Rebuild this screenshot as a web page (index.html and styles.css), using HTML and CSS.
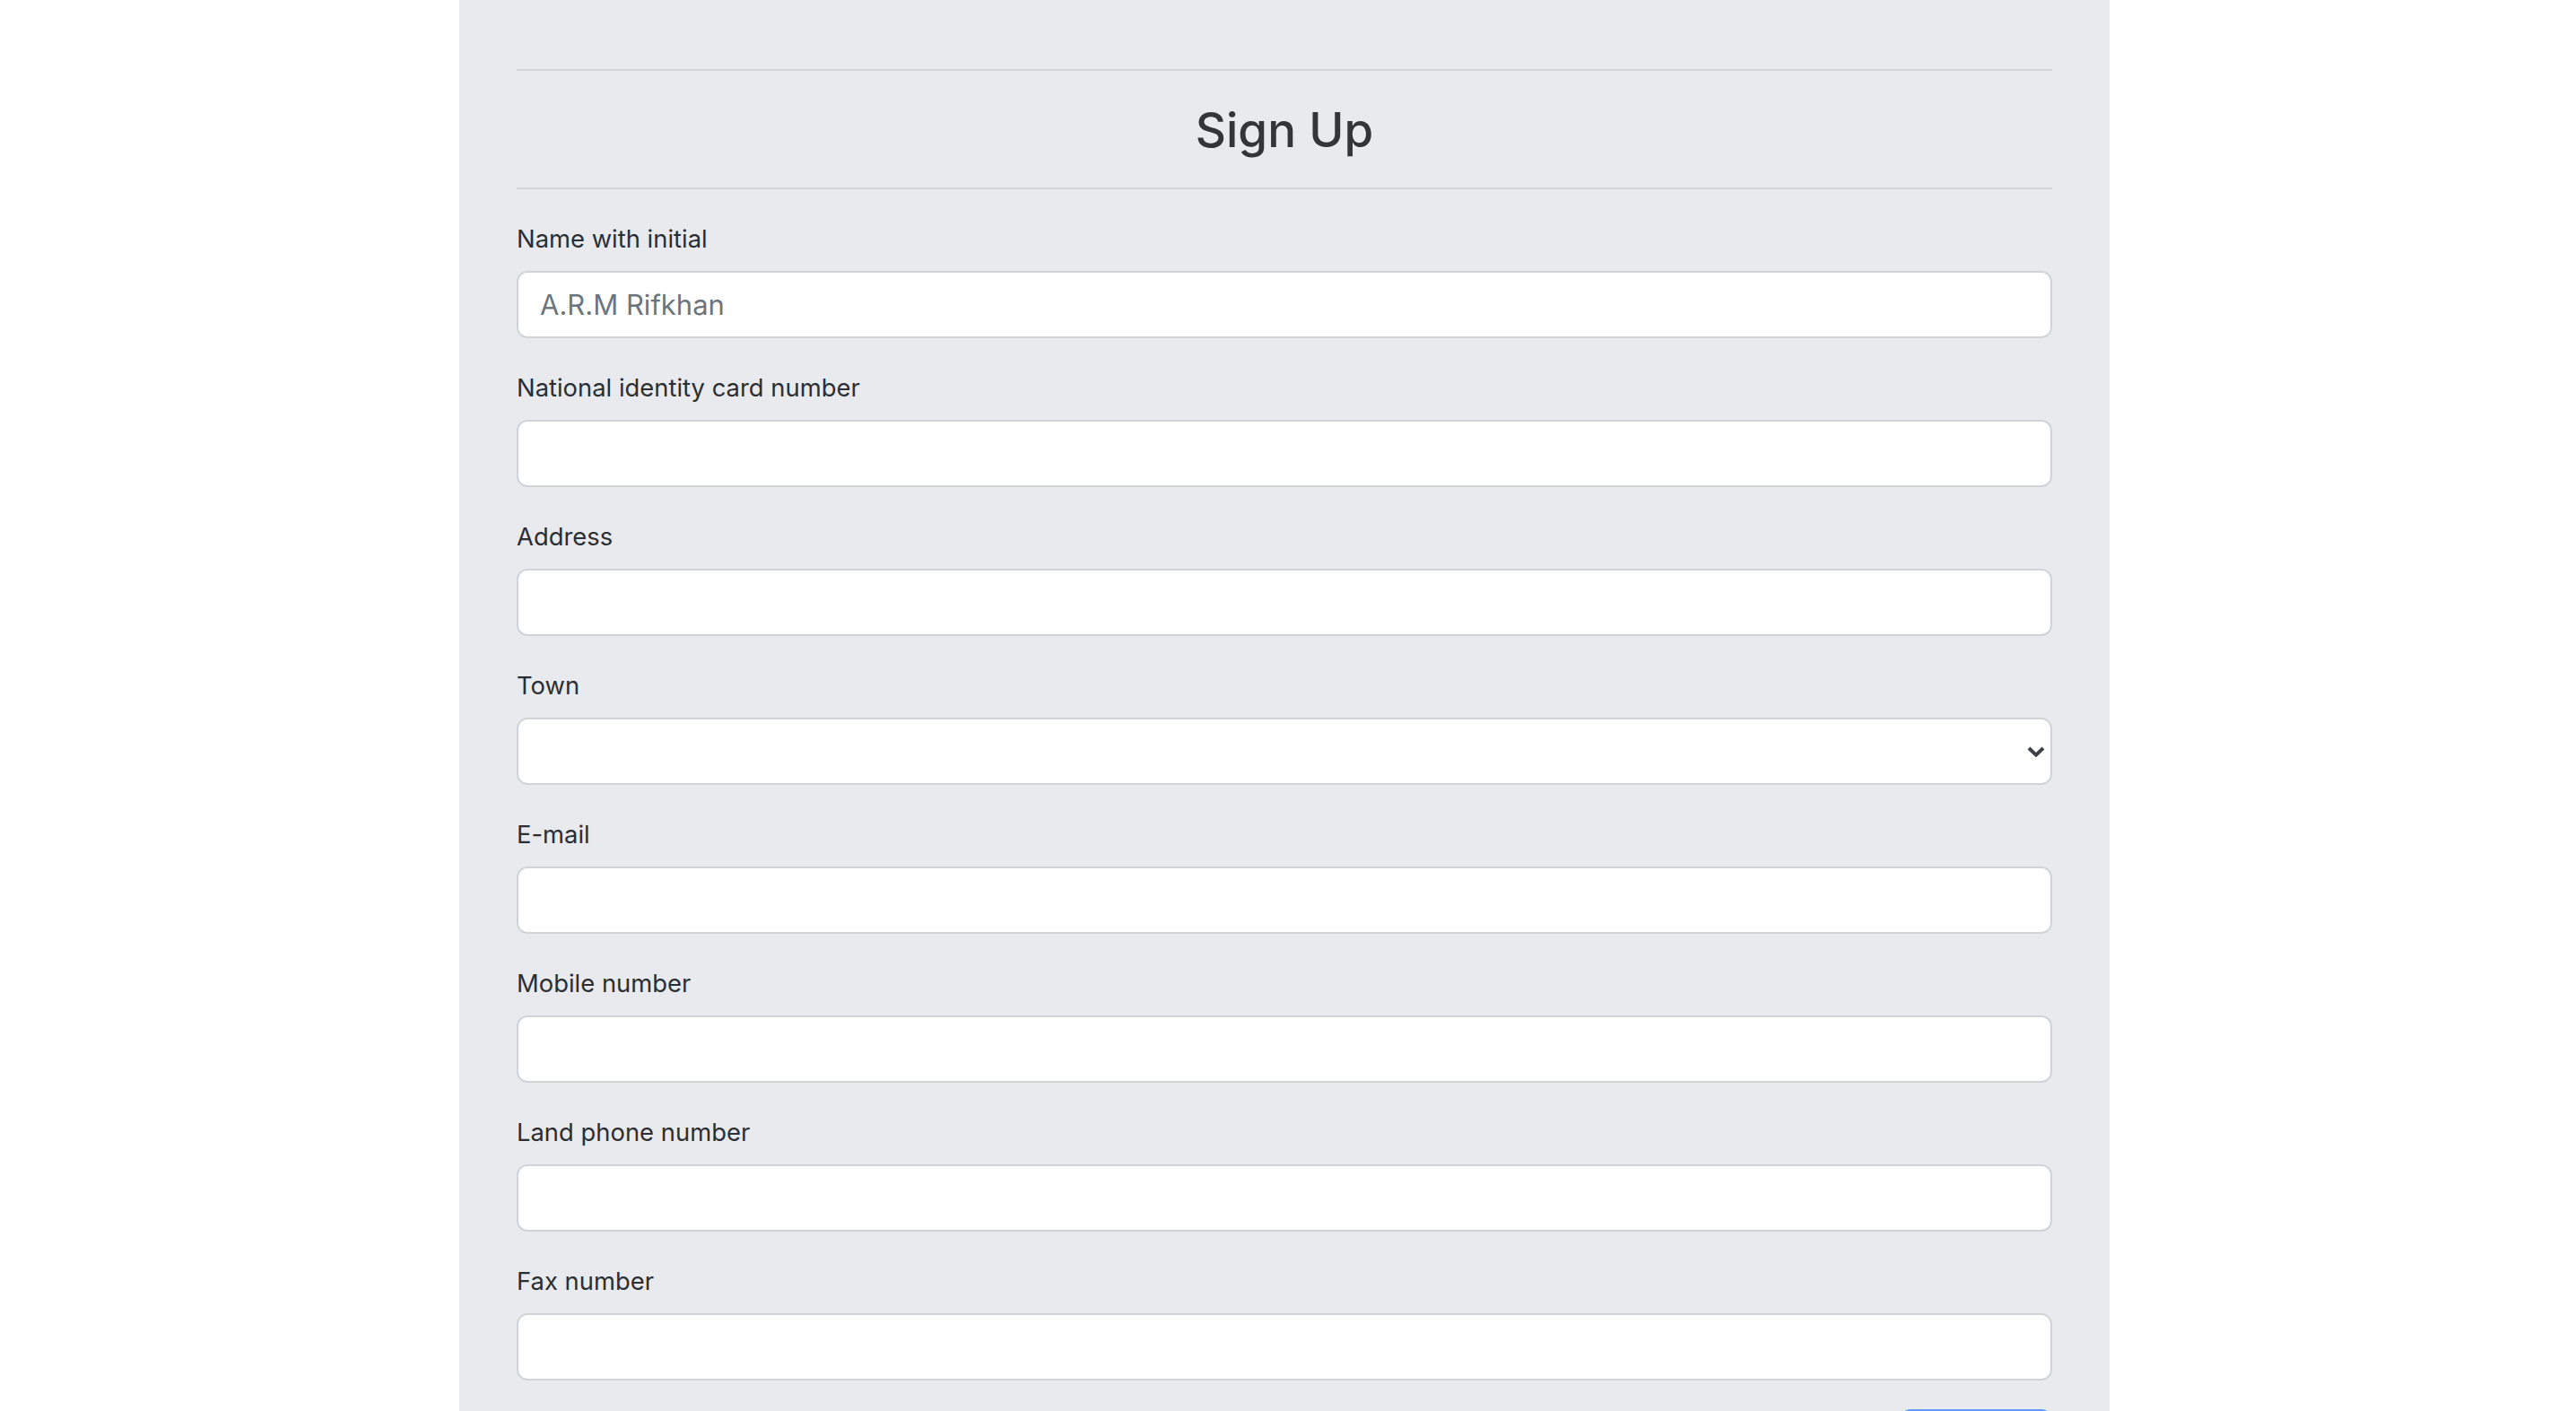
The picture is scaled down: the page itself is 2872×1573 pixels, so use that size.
FILE: index.html
```html
<!DOCTYPE html>
<html lang="en">
<head>
<meta charset="utf-8">
<title>Sign Up</title>
<link rel="stylesheet" href="styles.css">
</head>
<body>
<main class="page">
  <section class="card">
    <hr class="rule">
    <h1 class="title">Sign Up</h1>
    <hr class="rule">
    <form class="form">
      <div class="group">
        <label class="label" for="name">Name with initial</label>
        <input class="control" id="name" type="text" placeholder="A.R.M Rifkhan">
      </div>
      <div class="group">
        <label class="label" for="nic">National identity card number</label>
        <input class="control" id="nic" type="text">
      </div>
      <div class="group">
        <label class="label" for="address">Address</label>
        <input class="control" id="address" type="text">
      </div>
      <div class="group">
        <label class="label" for="town">Town</label>
        <div class="select-wrap">
          <select class="control select" id="town">
            <option></option>
          </select>
          <svg class="chevron" width="20" height="12" viewBox="0 0 20 12" aria-hidden="true">
            <polyline points="2,2 10,9.6 18,2" fill="none" stroke="#3d4145" stroke-width="4" stroke-linejoin="miter" stroke-linecap="butt"/>
          </svg>
        </div>
      </div>
      <div class="group">
        <label class="label" for="email">E-mail</label>
        <input class="control" id="email" type="email">
      </div>
      <div class="group">
        <label class="label" for="mobile">Mobile number</label>
        <input class="control" id="mobile" type="text">
      </div>
      <div class="group">
        <label class="label" for="land">Land phone number</label>
        <input class="control" id="land" type="text">
      </div>
      <div class="group">
        <label class="label" for="fax">Fax number</label>
        <input class="control" id="fax" type="text">
      </div>
      <div class="actions">
        <button class="btn" type="submit">Submit</button>
      </div>
    </form>
  </section>
</main>
</body>
</html>
```

FILE: styles.css
```css
html, body {
  margin: 0;
  padding: 0;
  background: #ffffff;
}

body {
  font-family: Inter, "Noto Sans", "Liberation Sans", sans-serif;
  color: #2b2e32;
  padding-right: 8px;
}

.page {
  display: flex;
  justify-content: center;
}

.card {
  width: 1840px;
  box-sizing: border-box;
  background: #e9eaee;
  padding: 77px 64px 200px;
}

.rule {
  margin: 0;
  border: 0;
  border-top: 2px solid #d3d4d8;
  height: 0;
}

.title {
  margin: 33px 0 31px;
  font-size: 53px;
  line-height: 66px;
  font-weight: 500;
  text-align: center;
  color: #333538;
}

.form {
  margin-top: 32px;
}

.group {
  margin-bottom: 32px;
}

.label {
  display: block;
  font-size: 27.4px;
  line-height: 46px;
  margin-bottom: 13px;
  color: #2b2e32;
}

.control {
  display: block;
  width: 100%;
  height: 75px;
  box-sizing: border-box;
  margin: 0;
  padding: 0 24px;
  border: 2px solid #d0d4d9;
  border-radius: 12px;
  background: #ffffff;
  font-family: inherit;
  font-size: 31px;
  color: #212529;
  outline: none;
}

.control::placeholder {
  color: #6c757d;
}

.select-wrap {
  position: relative;
}

.select {
  appearance: none;
  -webkit-appearance: none;
}

.chevron {
  position: absolute;
  right: 8px;
  top: 50%;
  transform: translateY(-50%);
  pointer-events: none;
}

.actions {
  display: flex;
  justify-content: flex-end;
}

.btn {
  width: 170px;
  height: 76px;
  border: 2px solid #5b9af8;
  border-radius: 12px;
  background: #5b9af8;
  color: #ffffff;
  font-family: inherit;
  font-size: 32px;
}
```
